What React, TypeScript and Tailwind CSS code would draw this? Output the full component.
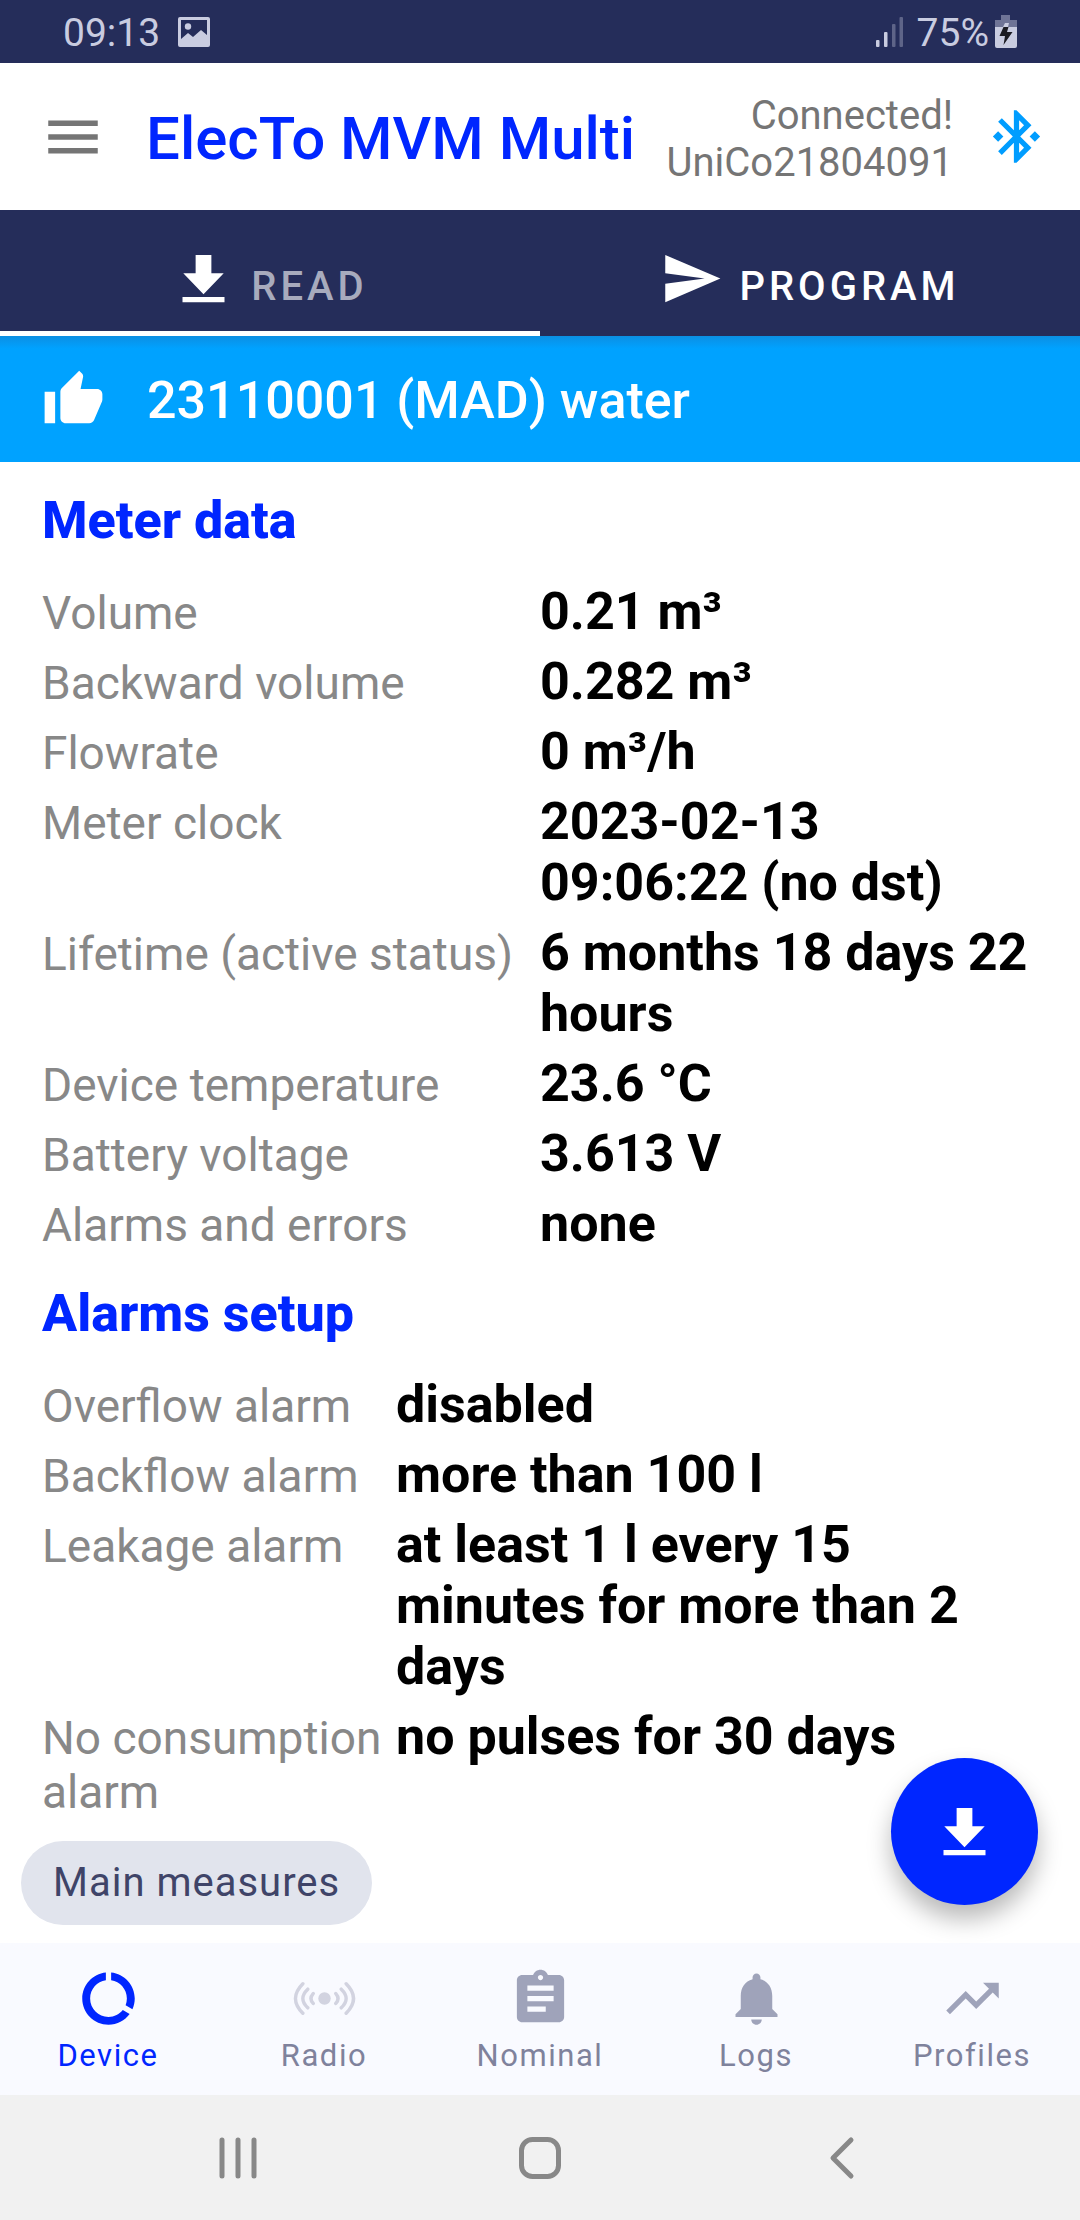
import React from "react";

type IconProps = { d: string; className?: string };

const Icon = ({ d, className = "size-[63px]" }: IconProps) => (
  <svg viewBox="0 0 24 24" fill="currentColor" aria-hidden="true" className={`shrink-0 ${className}`}>
    <path d={d} />
  </svg>
);

const paths = {
  menu: "M3 18h18v-2H3v2zm0-5h18v-2H3v2zm0-7v2h18V6H3z",
  download: "M9 3h6v7h4.7L12 18 4.3 10H9zM4 19h16v2H4z",
  send: "M2.01 21L23 12 2.01 3 2 10l15 2-15 2z",
  thumb:
    "M1 21h4V9H1v12zm22-11c0-1.1-.9-2-2-2h-6.31l.95-4.57.03-.32c0-.41-.17-.79-.44-1.06L14.17 1 7.59 7.59C7.22 7.95 7 8.45 7 9v10c0 1.1.9 2 2 2h9c.83 0 1.54-.5 1.84-1.22l3.02-7.05c.09-.23.14-.47.14-.73v-2z",
  bluetooth:
    "M7 12l-2-2-2 2 2 2 2-2zm10.71-4.29L12 2h-1v7.59L6.41 5 5 6.41 10.59 12 5 17.59 6.41 19 11 14.41V22h1l5.71-5.71-4.3-4.29 4.3-4.29zM13 5.83l1.88 1.88L13 9.59V5.83zm1.88 10.46L13 18.17v-3.76l1.88 1.88zM19 10l-2 2 2 2 2-2-2-2z",
  device:
    "M13 2.05v3.03c3.39.49 6 3.39 6 6.92 0 .9-.18 1.75-.48 2.54l2.6 1.53c.56-1.24.88-2.62.88-4.07 0-5.18-3.95-9.45-9-9.95zM12 19c-3.87 0-7-3.13-7-7 0-3.53 2.61-6.43 6-6.92V2.05c-5.06.5-9 4.76-9 9.95 0 5.52 4.47 10 9.99 10 3.31 0 6.24-1.61 8.06-4.09l-2.6-1.53C16.17 17.98 14.21 19 12 19z",
  nominal:
    "M19 3h-4.18C14.4 1.84 13.3 1 12 1c-1.3 0-2.4.84-2.82 2H5c-1.1 0-2 .9-2 2v14c0 1.1.9 2 2 2h14c1.1 0 2-.9 2-2V5c0-1.1-.9-2-2-2zm-7 0c.55 0 1 .45 1 1s-.45 1-1 1-1-.45-1-1 .45-1 1-1zm2 14H7v-2h7v2zm3-4H7v-2h10v2zm0-4H7V7h10v2z",
  logs: "M12 22c1.1 0 2-.9 2-2h-4c0 1.1.89 2 2 2zm6-6v-5c0-3.07-1.64-5.64-4.5-6.32V4c0-.83-.67-1.5-1.5-1.5s-1.5.67-1.5 1.5v.68C7.63 5.36 6 7.92 6 11v5l-2 2v1h16v-1l-2-2z",
  profiles: "M16 6l2.29 2.29-4.88 4.88-4-4L2 16.59 3.41 18l6-6 4 4 6.3-6.29L22 12V6z",
};

const RadioIcon = () => (
  <svg viewBox="0 0 64 64" fill="none" stroke="currentColor" strokeWidth="3.5" strokeLinecap="round" aria-hidden="true" className="size-[63px]">
    <circle cx="32" cy="32" r="6.3" fill="currentColor" stroke="none" />
    <path d="M20.500 27Q16 32 20.500 37M15 22.500Q5 32 15 41.500M10 17Q-5 32 10 47M43.500 27Q48 32 43.500 37M49 22.500Q59 32 49 41.500M54 17Q69 32 54 47" />
  </svg>
);

const PictureIcon = () => (
  <svg viewBox="0 0 32 30" fill="currentColor" aria-hidden="true" className="h-[30px] w-8">
    <path
      fillRule="evenodd"
      d="M2 0h28a2 2 0 0 1 2 2v26a2 2 0 0 1-2 2H2a2 2 0 0 1-2-2V2a2 2 0 0 1 2-2zM3 3v19l7-6 5 4 8-7 6 5V3z"
    />
    <circle cx="10" cy="9.500" r="3.200" />
  </svg>
);

const SignalIcon = () => (
  <svg viewBox="0 0 27 30" fill="currentColor" aria-hidden="true" className="h-[30px] w-[27px]">
    <rect x="0" y="23" width="3.500" height="7" rx="1" />
    <rect x="8" y="15" width="3.500" height="15" rx="1" />
    <rect x="16" y="7" width="3.500" height="23" rx="1" opacity="0.350" />
    <rect x="23.500" y="0" width="3.500" height="30" rx="1" opacity="0.350" />
  </svg>
);

const BatteryIcon = () => (
  <svg viewBox="0 0 22 33" fill="currentColor" aria-hidden="true" className="h-[33px] w-[22px]">
    <path opacity="0.450" d="M6 0h9v5h7v7H0V5h6z" />
    <path d="M0 12h22v19a2 2 0 0 1-2 2H2a2 2 0 0 1-2-2zM10 8h4l-1 4H8z" />
    <path fill="#1b1b22" d="M8.500 12h5l-1.500 5h5.500L8.500 30l1.500-9H4.500z" />
  </svg>
);

type Row = [string, string];

const meterData: Row[] = [
  ["Volume", "0.21 m³"],
  ["Backward volume", "0.282 m³"],
  ["Flowrate", "0 m³/h"],
  ["Meter clock", "2023-02-13 09:06:22 (no dst)"],
  ["Lifetime (active status)", "6 months 18 days 22 hours"],
  ["Device temperature", "23.6 °C"],
  ["Battery voltage", "3.613 V"],
  ["Alarms and errors", "none"],
];

const alarms: Row[] = [
  ["Overflow alarm", "disabled"],
  ["Backflow alarm", "more than 100 l"],
  ["Leakage alarm", "at least 1 l every 15 minutes for more than 2 days"],
  ["No consumption alarm", "no pulses for 30 days"],
];

const Section = ({ title, rows, labelWidth }: { title: string; rows: Row[]; labelWidth: string }) => (
  <section>
    <h2 className="text-[52px] leading-[61px] font-extrabold text-[#0026ff]">{title}</h2>
    <table className="mt-[26px] w-full table-fixed">
      <tbody>
        {rows.map(([label, value]) => (
          <tr key={label}>
            <th scope="row" className={`${labelWidth} pt-1 pb-[5px] text-left align-baseline text-[46px] leading-[54px] font-normal text-[#888888]`}>
              {label}
            </th>
            <td className="pt-1 pb-[5px] align-baseline text-[52px] leading-[61px] font-bold text-black">{value}</td>
          </tr>
        ))}
      </tbody>
    </table>
  </section>
);

const navItems: { label: string; icon: React.ReactNode }[] = [
  { label: "Device", icon: <Icon d={paths.device} /> },
  { label: "Radio", icon: <RadioIcon /> },
  { label: "Nominal", icon: <Icon d={paths.nominal} /> },
  { label: "Logs", icon: <Icon d={paths.logs} /> },
  { label: "Profiles", icon: <Icon d={paths.profiles} /> },
];

export default function App() {
  return (
    <div className="flex min-h-screen flex-col bg-white font-['Roboto',sans-serif]">
      <div className="flex h-[63px] items-center justify-between bg-[#252d5a] px-[63px] text-[39px] text-[#c9cce0]">
        <div className="flex items-center gap-[18px]">
          <span className="pt-1">09:13</span>
          <PictureIcon />
        </div>
        <div className="flex items-center">
          <SignalIcon />
          <span className="mr-1.5 ml-3.5 pt-1">75%</span>
          <BatteryIcon />
        </div>
      </div>

      <header className="flex h-[147px] items-center pr-8 pl-10">
        <button aria-label="Menu" className="text-[#757575]">
          <Icon d={paths.menu} className="size-[66px]" />
        </button>
        <h1 className="ml-10 flex-1 pt-1 text-[60px] leading-none font-medium whitespace-nowrap text-[#0026ff]">ElecTo MVM Multi</h1>
        <p className="pt-1 text-right text-[40px] leading-[47px] text-[#757575]">
          Connected!
          <br />
          UniCo21804091
        </p>
        <button aria-label="Bluetooth" className="ml-8 text-[#009dff]">
          <Icon d={paths.bluetooth} />
        </button>
      </header>

      <div role="tablist" className="grid grid-cols-2 bg-[#252d5a] text-[40px] leading-[47px] font-medium tracking-widest">
        <button role="tab" aria-selected="true" className="flex h-[126px] items-end justify-center gap-4 border-b-[5px] border-white pb-[21px] text-white">
          <Icon d={paths.download} />
          <span className="text-[#a8abbd]">READ</span>
        </button>
        <button role="tab" aria-selected="false" className="flex h-[126px] items-end justify-center gap-4 pb-[26px] text-white">
          <Icon d={paths.send} />
          PROGRAM
        </button>
      </div>

      <div className="flex h-[126px] items-center gap-[42px] bg-[#00a2ff] bg-linear-to-b from-[#0b8fe3] to-[#00a2ff] to-10% px-[42px] text-[52px] font-medium text-white">
        <Icon d={paths.thumb} />
        <p className="pt-1">23110001 (MAD) water</p>
      </div>

      <main className="relative flex flex-1 flex-col pb-[18px]">
        <div className="flex flex-col gap-6 px-[42px] pt-7">
          <Section title="Meter data" rows={meterData} labelWidth="w-1/2" />
          <Section title="Alarms setup" rows={alarms} labelWidth="w-[354px]" />
        </div>
        <button className="mt-auto ml-[21px] h-[84px] self-start rounded-full bg-[#e1e4ed] px-8 text-[40px] tracking-wide text-[#3f4468]">
          Main measures
        </button>
        <button
          aria-label="Download"
          className="absolute right-[42px] bottom-[38px] flex size-[147px] items-center justify-center rounded-full bg-[#0026ff] text-white shadow-[0_14px_24px_rgba(0,0,0,0.28)]"
        >
          <Icon d={paths.download} />
        </button>
      </main>

      <nav className="grid h-[152px] grid-cols-5 bg-[#f9faff] text-[31px] leading-9 tracking-wider text-[#7f829c]">
        {navItems.map(({ label, icon }, i) => (
          <a
            key={label}
            href="#"
            aria-current={i === 0 ? "page" : undefined}
            className="flex flex-col items-center gap-2 pt-6 aria-[current=page]:text-[#0026ff]"
          >
            <span className={i === 0 ? "text-[#0026ff]" : i === 1 ? "text-[#d2d3e0]" : "text-[#9fa3ba]"}>{icon}</span>
            {label}
          </a>
        ))}
      </nav>

      <div className="flex h-[125px] items-center justify-center gap-[238px] bg-[#f1f1f1] text-[#888888]">
        <button aria-label="Recent apps">
          <svg viewBox="0 0 64 64" fill="none" stroke="currentColor" strokeWidth="5" strokeLinecap="round" className="size-16">
            <path d="M16 14v36M32 14v36M48 14v36" />
          </svg>
        </button>
        <button aria-label="Home">
          <svg viewBox="0 0 64 64" fill="none" stroke="currentColor" strokeWidth="5" className="size-16">
            <rect x="13.500" y="13.500" width="37" height="37" rx="11" />
          </svg>
        </button>
        <button aria-label="Back">
          <svg viewBox="0 0 64 64" fill="none" stroke="currentColor" strokeWidth="5" strokeLinecap="round" strokeLinejoin="round" className="size-16">
            <path d="M41 14L23 32l18 18" />
          </svg>
        </button>
      </div>
    </div>
  );
}
